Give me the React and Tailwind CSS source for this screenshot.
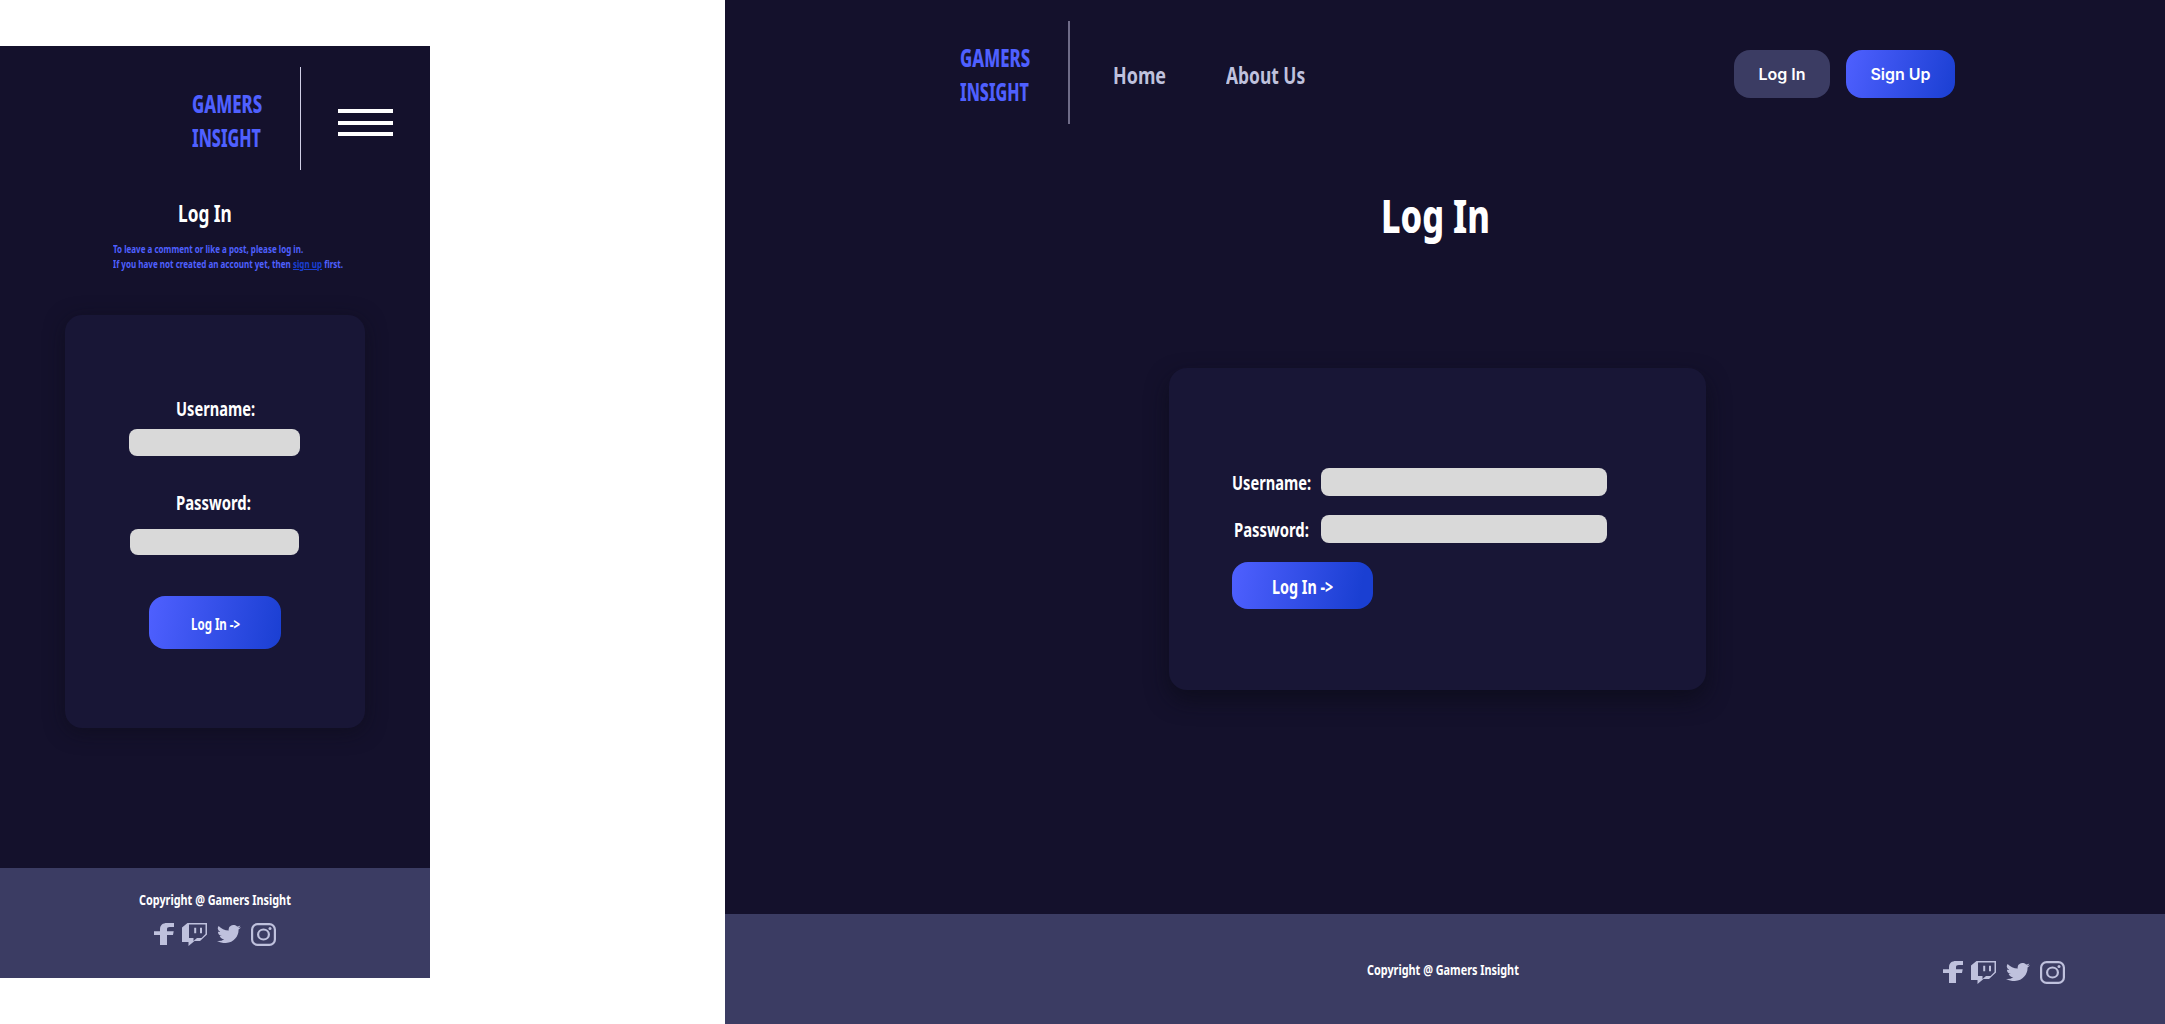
import { useLayoutEffect, useRef, useState } from "react";

// Text condensed horizontally so that it fills the width of its box.
function Fit({ className = "", children }) {
  const box = useRef(null);
  const ink = useRef(null);
  const [scale, setScale] = useState(1);
  useLayoutEffect(() => {
    setScale(box.current.clientWidth / ink.current.offsetWidth);
  }, []);
  return (
    <span ref={box} className={`block shrink-0 whitespace-nowrap ${className}`}>
      <span ref={ink} className="inline-block origin-left align-top" style={{ transform: `scaleX(${scale})` }}>
        {children}
      </span>
    </span>
  );
}

const Logo = () => (
  <div className="flex w-[71px] shrink-0 flex-col text-[24px] leading-[34px] font-extrabold text-[#4f60ff]">
    <Fit className="w-[70px]">GAMERS</Fit>
    <Fit className="w-[69px]">INSIGHT</Fit>
  </div>
);

const Socials = () => (
  <div className="flex h-[23px] shrink-0 text-[#bfc1dd]">
    <svg className="h-[22px] w-5" viewBox="0 0 20 22" fill="currentColor">
      <path d="M6 22V12H0V8.2h6V6.4C6 2 8.800 0 13 0h7v4h-4.200C13.800 4 13 4.700 13 6.400v1.800h6.700L19 12h-6v10z" />
    </svg>
    <svg className="ml-2 h-[23px] w-[25px]" viewBox="0 0 25 23" fill="currentColor">
      <path fillRule="evenodd" d="M5.500 0H25v11.500L18 18h-5.500L6.500 23v-4H0V4.500zM7 1.500V15h4.500v3l3.500-3h4.500l4-4V1.500z" />
      <path d="M12.200 4.800h2v5.400h-2zM18 4.800h2v5.400h-2z" />
    </svg>
    <svg className="mt-0.5 ml-2.5 h-[18px] w-6" viewBox="0 2.200 24 19.500" preserveAspectRatio="none" fill="currentColor">
      <path d="M23.950 4.570a10 10 0 0 1-2.820.77 4.960 4.960 0 0 0 2.160-2.720c-.95.550-2 .950-3.130 1.180a4.920 4.920 0 0 0-8.380 4.480C7.690 8.090 4.070 6.130 1.640 3.160a4.920 4.920 0 0 0 1.520 6.570 4.900 4.900 0 0 1-2.230-.61v.06a4.920 4.920 0 0 0 3.950 4.830 5 5 0 0 1-2.210.08 4.940 4.940 0 0 0 4.600 3.420A9.870 9.870 0 0 1 0 19.540a14 14 0 0 0 7.550 2.210c9.050 0 14-7.500 14-13.980 0-.21 0-.42-.02-.63a9.940 9.940 0 0 0 2.460-2.550z" />
    </svg>
    <svg className="ml-2.5 h-[23px] w-[25px]" viewBox="0 0 25 23" fill="none" stroke="currentColor" strokeWidth="2.2">
      <rect x="1.100" y="1.100" width="22.800" height="20.800" rx="5.500" />
      <ellipse cx="12.500" cy="11.500" rx="5.400" ry="5" />
      <circle cx="19" cy="5.500" r="1.500" fill="currentColor" stroke="none" />
    </svg>
  </div>
);

function Mobile() {
  return (
    <section className="mt-[46px] flex h-[932px] w-[430px] shrink-0 flex-col bg-[#14112c]">
      <header className="flex h-[124px] items-start pt-[21px] pl-[192px]">
        <div className="pt-[20px]"><Logo /></div>
        <div className="ml-[37px] h-[103px] w-px bg-[#d0cfe6]" />
        <div className="mt-[42px] ml-[37px] w-[55px]">
          <div className="h-1 bg-white" />
          <div className="mt-2 h-1 bg-white" />
          <div className="mt-[7px] h-1 bg-white" />
        </div>
      </header>
      <h1 className="mt-[29px] ml-[178px] text-[23px] leading-[28px] font-bold text-white">
        <Fit className="w-[54px]">Log In</Fit>
      </h1>
      <div className="mt-[15px] ml-[113px] text-[10.500px] leading-[15px] font-bold text-[#4f60ff]">
        <Fit className="w-[190px]">To leave a comment or like a post, please log in.</Fit>
        <Fit className="w-[230px]">If you have not created an account yet, then <a className="text-[#1a3fd2] underline">sign up</a> first.</Fit>
      </div>
      <form className="mt-[43px] ml-[65px] flex h-[413px] w-[300px] flex-col rounded-[17px] bg-[#181636] pt-[80px] shadow-[0_4px_20px_0px_rgba(12,12,24,0.550)]">
        <label className="ml-[111px] text-[20px] leading-[28px] font-bold text-white"><Fit className="w-[79px]">Username:</Fit></label>
        <div className="mt-[6px] ml-[64px] h-[27px] w-[171px] rounded-lg bg-[#d9d9d9]" />
        <label className="mt-[33px] ml-[111px] text-[20px] leading-[28px] font-bold text-white"><Fit className="w-[75px]">Password:</Fit></label>
        <div className="mt-[12px] ml-[65px] h-[26px] w-[169px] rounded-lg bg-[#d9d9d9]" />
        <div className="mt-[41px] ml-[84px] flex h-[53px] w-[132px] items-center justify-center rounded-2xl bg-[linear-gradient(100deg,#4f60ff,#1a3fd2)] pt-[2px] text-[15.500px] leading-[24px] font-bold text-white">
          <Fit className="w-[49px]">Log In -&gt;</Fit>
        </div>
      </form>
      <footer className="mt-auto flex h-[110px] flex-col bg-[#3b3c63] pt-[19px]">
        <Fit className="ml-[139px] w-[152px] text-[15px] leading-[24px] font-bold text-white">Copyright @ Gamers Insight</Fit>
        <div className="mt-[12px] ml-[154px]"><Socials /></div>
      </footer>
    </section>
  );
}

function Desktop() {
  return (
    <section className="ml-[295px] flex h-[1024px] w-[1440px] shrink-0 flex-col bg-[#14112c]">
      <header className="flex h-[145px] items-start pt-[21px] pl-[235px]">
        <div className="pt-[20px]"><Logo /></div>
        <div className="ml-[37px] h-[103px] w-0.5 bg-[#6f6c88]" />
        <nav className="mt-[37px] ml-[43px] flex text-[24px] leading-[34px] font-bold text-[#bfc1dd]">
          <Fit className="w-[53px]">Home</Fit>
          <Fit className="ml-[60px] w-[79px]">About Us</Fit>
        </nav>
        <div className="mt-[29px] ml-auto flex gap-4 pr-[210px] font-[Inter] text-[16px] font-semibold text-white">
          <div className="flex h-12 w-24 items-center justify-center rounded-2xl bg-[#3b3c63]">Log In</div>
          <div className="flex h-12 w-[109px] items-center justify-center rounded-2xl bg-[linear-gradient(105deg,#4f60ff,#1a3fd2)]">Sign Up</div>
        </div>
      </header>
      <h1 className="mt-[40px] ml-[656px] text-[47px] leading-[60px] font-extrabold text-white">
        <Fit className="w-[109px]">Log In</Fit>
      </h1>
      <form className="mt-[123px] ml-[444px] flex h-[322px] w-[537px] flex-col rounded-[18px] bg-[#181636] pt-[100px] pl-[63px] text-[20px] leading-[28px] font-bold text-white shadow-[0_10px_22px_0px_rgba(12,12,24,0.700)]">
        <div className="flex h-[28px]">
          <Fit className="mt-px w-[79px]">Username:</Fit>
          <div className="ml-[10px] h-[28px] w-[286px] rounded-lg bg-[#d9d9d9]" />
        </div>
        <div className="mt-[19px] flex h-[28px]">
          <Fit className="mt-px ml-[2px] w-[75px]">Password:</Fit>
          <div className="ml-[12px] h-[28px] w-[286px] rounded-lg bg-[#d9d9d9]" />
        </div>
        <div className="mt-[19px] flex h-[47px] w-[141px] items-center justify-center rounded-2xl bg-[linear-gradient(100deg,#4f60ff,#1a3fd2_90%)] pt-[2px]">
          <Fit className="w-[61px]">Log In -&gt;</Fit>
        </div>
      </form>
      <footer className="mt-auto flex h-[110px] bg-[#3b3c63] pr-[100px] pl-[642px]">
        <Fit className="mt-[43px] w-[152px] text-[15px] leading-[24px] font-bold text-white">Copyright @ Gamers Insight</Fit>
        <div className="mt-[47px] ml-auto"><Socials /></div>
      </footer>
    </section>
  );
}

export default function App() {
  return (
    <main className="flex h-[1024px] w-[2165px] overflow-hidden bg-white font-['Noto_Sans',sans-serif]">
      <Mobile />
      <Desktop />
    </main>
  );
}
